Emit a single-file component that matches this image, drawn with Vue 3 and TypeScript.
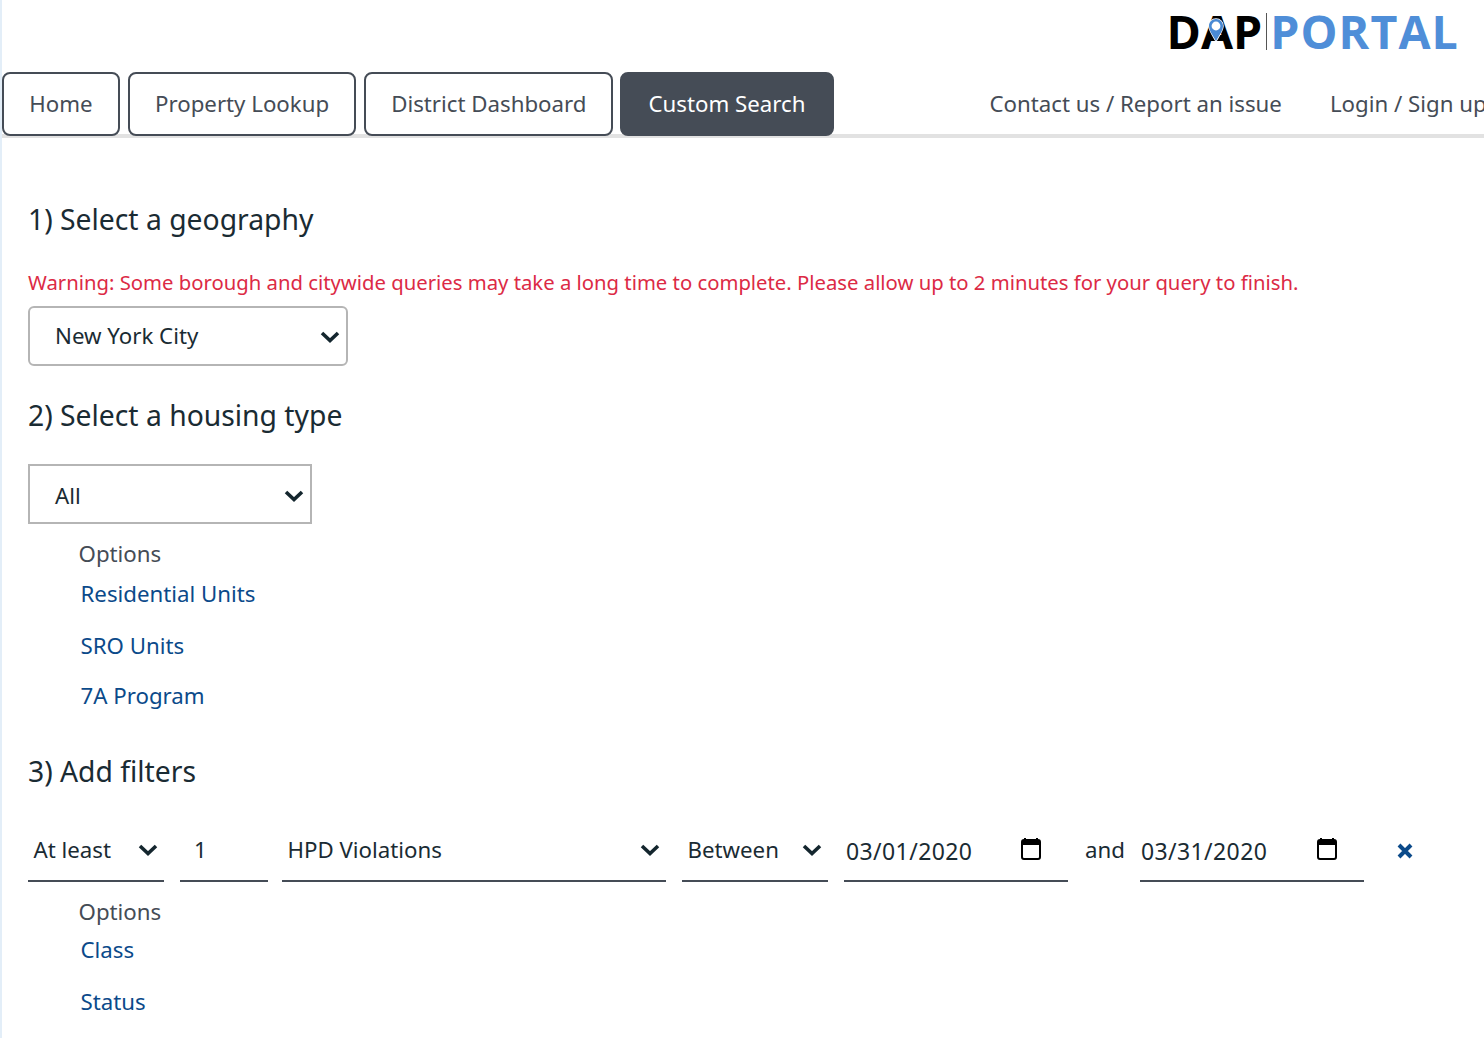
<script setup lang="ts">
const tabs: { label: string; active?: boolean }[] = [
  { label: 'Home' },
  { label: 'Property Lookup' },
  { label: 'District Dashboard' },
  { label: 'Custom Search', active: true },
]
const housing: string[] = ['Residential Units', 'SRO Units', '7A Program']
</script>

<template>
  <div class="page">
    <header class="logo-row">
      <div class="logo">
        <span class="dap">DAP</span>
        <span class="logo-sep"></span>
        <span class="portal">PORTAL</span>
        <svg class="pin" width="18" height="28" viewBox="0 0 18 28">
          <path d="M9 2C5 2 2 5 2 9c0 4 3 8 7 15 4-7 7-11 7-15 0-4-3-7-7-7z" fill="#4a8ad4" stroke="#fff" stroke-width="1.5" paint-order="stroke" />
          <circle cx="9" cy="9" r="4.4" fill="#fff" />
        </svg>
      </div>
    </header>

    <nav class="nav">
      <a v-for="t in tabs" :key="t.label" class="tab" :class="{ active: t.active }">{{ t.label }}</a>
      <a class="nav-link contact">Contact us / Report an issue</a>
      <a class="nav-link login">Login / Sign up</a>
    </nav>

    <main class="content">
      <h2 class="h1st">1) Select a geography</h2>
      <p class="warning">Warning: Some borough and citywide queries may take a long time to complete. Please allow up to 2 minutes for your query to finish.</p>
      <div class="box rounded">
        <span class="box-text">New York City</span>
        <svg class="chev" width="20" height="13" viewBox="0 0 20 13"><path d="M2 3l8 7.5L18 3" /></svg>
      </div>

      <h2 class="h2nd">2) Select a housing type</h2>
      <div class="box square">
        <span>All</span>
        <svg class="chev" width="20" height="13" viewBox="0 0 20 13"><path d="M2 3l8 7.5L18 3" /></svg>
      </div>
      <div class="options first">Options</div>
      <a v-for="h in housing" :key="h" class="opt-link">{{ h }}</a>

      <h2 class="h3rd">3) Add filters</h2>
      <div class="filters">
        <div class="field f-atleast"><span>At least</span><svg class="chev" width="20" height="13" viewBox="0 0 20 13"><path d="M2 3l8 7.5L18 3" /></svg></div>
        <div class="field f-one"><span>1</span></div>
        <div class="field f-type"><span>HPD Violations</span><svg class="chev" width="20" height="13" viewBox="0 0 20 13"><path d="M2 3l8 7.5L18 3" /></svg></div>
        <div class="field f-between"><span>Between</span><svg class="chev" width="20" height="13" viewBox="0 0 20 13"><path d="M2 3l8 7.5L18 3" /></svg></div>
        <div class="field f-date">
          <span class="date">03/01/2020</span>
          <svg class="cal" width="22" height="24" viewBox="0 0 22 24"><path d="M5 1v4M17 1v4" stroke="#000" stroke-width="2" /><rect x="2" y="3" width="18" height="19" rx="2" fill="none" stroke="#000" stroke-width="2" /><rect x="2" y="3" width="18" height="5" fill="#000" /></svg>
        </div>
        <span class="and">and</span>
        <div class="field f-date f-date-end">
          <span class="date">03/31/2020</span>
          <svg class="cal" width="22" height="24" viewBox="0 0 22 24"><path d="M5 1v4M17 1v4" stroke="#000" stroke-width="2" /><rect x="2" y="3" width="18" height="19" rx="2" fill="none" stroke="#000" stroke-width="2" /><rect x="2" y="3" width="18" height="5" fill="#000" /></svg>
        </div>
        <svg class="close" width="16" height="16" viewBox="0 0 16 16"><path d="M2 2l12 12M14 2L2 14" /></svg>
      </div>
      <div class="options second">Options</div>
      <a class="opt-link">Class</a>
      <a class="opt-link">Status</a>
    </main>
  </div>
</template>

<style>
html, body { margin: 0; background: #fff; overflow: hidden; }
</style>

<style scoped>
.page {
  height: 1038px;
  overflow: hidden;
  border-left: 2px solid #e3eef8;
  box-sizing: border-box;
  font-family: "Noto Sans", "Open Sans", sans-serif;
  color: #1a2b33;
  background: #fff;
}
.logo-row { height: 72px; display: flex; justify-content: flex-end; padding-right: 25px; box-sizing: border-box; }
.logo {
  position: relative;
  display: flex;
  align-items: center;
  height: 62px;
  font-family: "Open Sans", sans-serif;
  font-weight: 700;
  font-size: 46.5px;
  line-height: 62px;
}
.dap { color: #000; }
.logo-sep { width: 1px; height: 37px; background: #555; margin: 0 3px 0 4px; }
.portal { color: #4f8ed8; letter-spacing: 1.1px; }
.pin { position: absolute; left: 40px; top: 17px; }

.nav {
  display: flex;
  align-items: flex-start;
  height: 66px;
  box-sizing: border-box;
  border-bottom: 4px solid #e2e2e2;
}
.tab {
  flex: none;
  height: 64px;
  min-width: 118px;
  box-sizing: border-box;
  border: 2px solid #454c56;
  border-radius: 8px;
  padding: 0 25px;
  margin-right: 8px;
  font-size: 22.25px;
  line-height: 59px;
  text-align: center;
  color: #454c56;
  background: #fff;
  white-space: nowrap;
}
.tab.active { background: #454c56; color: #fff; margin-left: -1px; padding: 0 27px 0 26px; }
.nav-link { flex: none; font-size: 22.25px; line-height: 63px; color: #454c56; white-space: nowrap; }
.contact { margin-left: 147px; }
.login { margin-left: 48px; }

.content { padding-left: 26px; }
h2 { margin: 0; font-weight: 400; font-size: 28.3px; line-height: 38px; color: #1a2b33; }
.h1st { margin-top: 62px; }
.warning { margin: 29px 0 0; font-size: 20.29px; line-height: 30px; color: #dc2a45; white-space: nowrap; }
.box {
  display: flex;
  align-items: center;
  justify-content: space-between;
  box-sizing: border-box;
  height: 60px;
  border: 2px solid #b5b5b5;
  font-size: 22.25px;
  color: #1a2b33;
}
.box-text { margin-bottom: 2px; }
.rounded { width: 320px; margin-top: 9px; border-radius: 6px; padding: 0 6px 0 25px; }
.square { width: 284px; margin-top: 30px; padding: 2px 6px 0 25px; }
.h2nd { margin-top: 30px; }
.chev { fill: none; stroke: #14262e; stroke-width: 3.6; flex: none; }
.options { font-size: 22.25px; line-height: 30px; color: #454c56; padding-left: 50.5px; }
.options.first { margin-top: 15px; margin-bottom: 10px; }
.opt-link { display: block; font-size: 22.25px; line-height: 30px; color: #0b4a8a; padding-left: 52.5px; margin-bottom: 22px; }
.options.first ~ .opt-link:nth-of-type(2) { margin-bottom: 20px; }
.h3rd { margin-top: 41px; }
.filters { display: flex; align-items: flex-start; margin-top: 30px; height: 80px; }
.field {
  display: flex;
  align-items: flex-start;
  justify-content: space-between;
  box-sizing: border-box;
  height: 62px;
  border-bottom: 2px solid #454c56;
  font-size: 22.25px;
  line-height: 60px;
  color: #1a2b33;
  flex: none;
  padding: 0 6px 0 5.5px;
}
.field .chev { margin-top: 23px; }
.f-atleast { width: 136px; margin-right: 16px; }
.f-one { width: 88px; margin-right: 14px; padding-left: 14px; }
.f-type { width: 384px; margin-right: 16px; }
.f-between { width: 146px; margin-right: 16px; }
.f-date { width: 224px; padding: 0 26px 0 2px; }
.f-date-end { padding-left: 1px; }
.date { font-size: 23px; letter-spacing: 0.4px; line-height: 63px; }
.cal { margin-top: 17px; }
.and { font-size: 22.25px; line-height: 60px; margin: 0 15px 0 17px; }
.close { fill: none; stroke: #0b4a8a; stroke-width: 4; margin: 23px 0 0 33px; }
.options.second { margin-top: -3px; margin-bottom: 8px; }
</style>
